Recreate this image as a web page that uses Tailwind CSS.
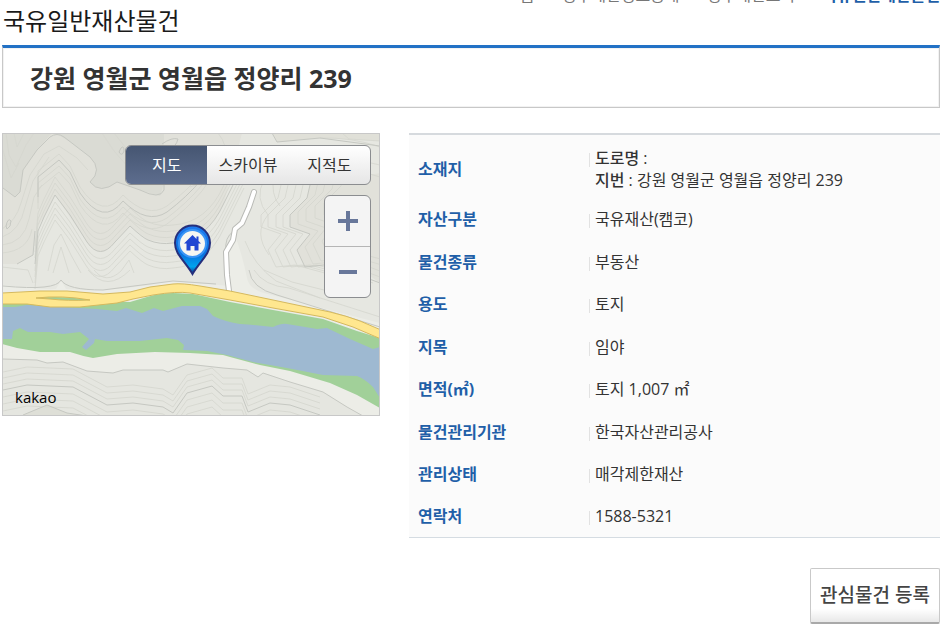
<!DOCTYPE html>
<html lang="ko">
<head>
    <meta charset="UTF-8">
    <meta name="viewport" content="width=device-width, initial-scale=1.0">
    <title>국유일반재산물건</title>
    <script src="https://cdn.jsdelivr.net/npm/@tailwindcss/browser@4"></script>
</head>
<body class="bg-white pl-[2px] pr-[7px] overflow-x-hidden font-['Open_Sans','Noto_Sans_CJK_KR',sans-serif] text-[#333]">

    <!-- Breadcrumb -->
    <nav class="-mt-[17px] flex justify-end gap-[9px] h-6 text-base leading-6 text-[#777] whitespace-nowrap">
        <a href="#">홈</a>
        <span class="text-[#bbb]">&gt;</span>
        <a href="#">정부재산정보공개</a>
        <span class="text-[#bbb]">&gt;</span>
        <a href="#">정부재산조회</a>
        <span class="text-[#bbb]">&gt;</span>
        <a href="#" class="font-bold text-[#1f5fa8]">국유일반재산물건</a>
    </nav>

    <h1 class="pl-px text-2xl leading-7 text-[#1a1a1a]">국유일반재산물건</h1>

    <div class="mt-[10px] h-[63px] flex items-center pl-[27px] border border-[#c8c8c8] border-t-[3px] border-t-[#2271c5] shadow-[inset_0_0_0_1px_#f2f2f2]">
        <h2 class="text-[25px] leading-8 font-bold">강원 영월군 영월읍 정양리 239</h2>
    </div>

    <main class="mt-[25px] flex items-start gap-[29px]">

        <!-- Map -->
        <div class="relative w-[378px] h-[283px] shrink-0 overflow-hidden border border-[#c8c8c8]">
            <svg class="block w-full h-full" viewBox="1 1 376 281" fill="none">
                <defs>
                    <path id="ridge" d="M33 131L36 98L42 84L53 62L68 82L85 109Q98 128 113 109L128 93Q141 105 146 107Q158 112 171 110Q205 108 222 70Q232 50 242 30"/>
                    <path id="upper" d="M36 64V44L57 27L68 39L78 60Q101 94 121 68Q145 92 165 79Q185 64 200 46L218 20"/>
                    <path id="east" d="M308 52L305 65L288 82V94L308 101L295 117L303 134L322 132Q350 138 378 150"/>
                    <path id="south" d="M1 257L25 252L71 254L105 272L131 270L161 274L171 280L185 260L210 253L221 263H240L246 279L268 270L288 272L318 282"/>
                    <linearGradient id="pin" x1="0" y1="0" x2="0" y2="1">
                        <stop offset="0" stop-color="#1d7af0"/>
                        <stop offset=".6" stop-color="#0873df"/>
                        <stop offset=".85" stop-color="#00a4ee"/>
                        <stop offset="1" stop-color="#122a86"/>
                    </linearGradient>
                </defs>
                <rect width="380" height="285" fill="#e6e7e1"/>

                <!-- terrain shading -->
                <path d="M0 0H240L222 70Q205 108 171 110L146 107L128 93L113 109Q98 128 85 109L53 62L42 84L33 98L31 122L15 131H0z" fill="#e1e1da"/>
                <path d="M0 0H50L35 17L21 37L18 59L13 64L1 55zM55 1L70 10L88 24Q101 37 88 49Q98 62 115 49L138 57L158 63L162 50V0z" fill="#dadbd4"/>
                <path d="M308 52L305 65L288 82V94L308 101L295 117L303 134L322 132Q350 128 378 150V40z" fill="#e1e1da"/>
                <path d="M270 0L275 9L318 5L378 8V0z" fill="#e0e0d8"/>
                <path d="M0 152Q40 157 54 156L59 147L64 156Q110 160 170 148L228 153L224 119L232 100Q240 120 245 145Q247 158 270 162L378 190V283H0z" fill="#ecede7"/>
                <path d="M1 226L35 227L45 230L61 229L85 238L111 240L121 237H161L166 239L185 231L221 235L245 237L256 244L261 240L288 249L321 259L345 274L361 283H0z" fill="#e5e6e0"/>
                <path d="M21 282L45 272L65 280L85 283z" fill="#dedfd7"/>

                <!-- minor contours -->
                <g stroke="#d4d5ce" stroke-width=".8">
                    <use href="#ridge" y="-6"/><use href="#ridge" y="-12"/><use href="#ridge" y="-18"/>
                    <use href="#ridge" y="7"/><use href="#ridge" y="13"/><use href="#ridge" y="19"/><use href="#ridge" y="25"/>
                    <use href="#upper" y="-6"/><use href="#upper" y="6"/><use href="#upper" y="12"/>
                    <use href="#east" x="-7"/><use href="#east" x="-14"/><use href="#east" x="-22"/><use href="#east" x="-29"/>
                    <use href="#east" x="8" y="-3"/><use href="#east" x="16" y="-6"/><use href="#east" x="25" y="-9"/><use href="#east" x="34" y="-12"/>
                    <use href="#south" y="-6"/><use href="#south" y="-12"/><use href="#south" y="-18"/><use href="#south" y="7"/><use href="#south" y="14"/><use href="#south" y="21"/>
                    <path d="M4 0L7 22L14 34L24 12L32 0M0 14L9 45L17 30M12 0L15 14L22 0M100 0L112 18L126 34L148 50M112 0L132 25L153 42M0 112Q22 110 27 86L32 64L40 52M0 120Q26 118 30 96M0 104Q18 98 23 74L31 48L47 24M0 96Q14 88 19 70L28 42L42 21L57 13L75 25L86 37"/>
                    <path d="M46 138L52 112L59 101L69 122L79 140M51 140L59 114L67 140M0 134L26 137L31 150M92 137Q104 152 119 138L127 127L132 140M86 137Q105 160 128 137"/>
                    <path d="M180 48Q196 44 205 12M188 54Q208 49 213 18M216 0Q226 12 223 27M275 20Q305 15 378 32M278 35Q310 22 378 44M318 5Q350 4 378 14M340 0L347 6L378 8"/>
                    <path d="M262 47Q252 65 266 82Q251 100 267 122M272 40Q268 62 278 73M243 108Q252 132 274 148L318 165M262 137L290 149L326 158M252 137Q262 153 287 155L378 184"/>
                </g>
                <!-- major contours -->
                <g stroke="#c6c8c2" stroke-width="1">
                    <use href="#ridge"/><use href="#upper"/><use href="#east"/><use href="#south"/>
                    <path d="M1 55L13 64L18 59L21 37L35 17L48 4Q55 -1 62 4L88 24Q101 37 88 49Q98 62 115 49L138 57Q158 67 162 57V50"/>
                    <path d="M15 131L31 122L33 98M270 0L275 9L318 5L378 13M4 93Q6 84 9 88Q9 94 5 96zM119 15Q122 12 122 18Q120 24 117 19zM160 11Q170 4 176 6Q174 14 166 18"/>
                    <path d="M1 226L35 227L45 230L61 229L85 238L111 240L121 237H161L166 239L185 231L221 235L245 237L256 244L261 240L288 249L321 259L345 274L361 283M21 282L45 272L65 280L85 283"/>
                    <path d="M1 153Q54 158 59 147Q65 157 101 157L171 148L214 151M224 119Q222 104 232 98M247 137Q249 155 275 162L378 194"/>
                </g>

                <!-- lane -->
                <path d="M252 59L247 74L240 90L233 96L231 107L224 119L225 142L227 158" stroke="#b9bab6" stroke-width="6" stroke-linecap="round" stroke-linejoin="round"/>
                <path d="M252 59L247 74L240 90L233 96L231 107L224 119L225 142L227 158" stroke="#fff" stroke-width="4" stroke-linecap="round" stroke-linejoin="round"/>

                <!-- river banks and river -->
                <path d="M0 168H95L128 169L145 164Q158 160 171 160L191 161L228 169L271 177L321 186L355 198L378 205V275L355 262L328 250L288 238L258 232L228 224L221 222L188 220L153 219L115 221L91 225Q80 223 68 219H38L15 215L0 211z" fill="#a1d099"/>
                <path d="M0 174H13L25 172L78 175L95 176L115 178L124 175L140 180L152 175L161 178L180 173L198 173L205 176L211 183Q224 189 238 191Q255 192 271 194Q280 190 285 191L315 196L325 195L348 206L371 216L378 214V265L371 254Q363 246 355 243L321 242L285 235L251 229L225 222L205 218L181 217L182 212L176 207L165 205L138 208H105L93 206L92 210L84 217L80 214L87 206L78 199L61 201L48 199H26L18 195L11 198L10 206H0z" fill="#9eb9d1"/>

                <!-- highway -->
                <path d="M0 160L38 158H65L101 161L128 159L148 154L171 151Q180 150 198 153L228 158L271 167L328 179Q345 183 358 188L379 197V206L351 194L321 184L271 175L228 167L188 160Q175 158 151 162L131 166L115 170L78 174H48L25 171H0z" fill="#ffe78f" stroke="#d5b95e" stroke-width="1"/>
                <path d="M34 165Q60 162 88 167Q65 168 48 166z" fill="#a1d099" stroke="#d5b95e" stroke-width="1"/>

                <!-- marker -->
                <path d="M190.500 92.500A17.500 17.500 0 0 0 173 110C173 121 182 127 190.500 141C199 127 208 121 208 110A17.500 17.500 0 0 0 190.500 92.500z" fill="url(#pin)" stroke="#252f7c" stroke-width="2"/>
                <circle cx="190.500" cy="110.500" r="13.500" fill="#f6f7f2" stroke="#3b95f5" stroke-width="2"/>
                <path d="M190.500 102L182 110.500H184.500V117.500H188.500V113H192.500V117.500H196.500V110.500H199L196.500 108V103.500H194.500V106z" fill="#2147d2"/>
            </svg>

            <!-- Map controls -->
            <div class="absolute top-[11px] right-2 flex flex-col items-end gap-[10px]">
                <div class="grid grid-cols-3 w-[246px] h-10 overflow-hidden rounded-md border border-[#8b8d90] bg-linear-to-b from-white to-[#e6e6e6] text-base">
                    <button type="button" class="bg-linear-to-b from-[#465672] to-[#5d6d8e] text-white">지도</button>
                    <button type="button">스카이뷰</button>
                    <button type="button">지적도</button>
                </div>
                <div class="grid grid-rows-2 w-[47px] h-[103px] rounded-md border border-[#8b8d90] bg-[#f4f4f4]">
                    <button type="button" aria-label="확대" class="flex items-center justify-center border-b border-[#b5b5b5]">
                        <svg width="20" height="20" viewBox="0 0 20 20"><path d="M8 0h4v8h8v4h-8v8H8v-8H0V8h8z" fill="#68779a"/></svg>
                    </button>
                    <button type="button" aria-label="축소" class="flex items-center justify-center">
                        <svg width="20" height="20" viewBox="0 0 20 20"><path d="M1 8h18v4H1z" fill="#68779a"/></svg>
                    </button>
                </div>
            </div>
            <span class="absolute left-3 bottom-2 font-['Open_Sans'] text-[15px] leading-5 font-medium text-black">kakao</span>
        </div>

        <!-- Details -->
        <div class="flex-1 border-t-2 border-t-[#d6dade] border-b border-b-[#d5dce2] bg-[#fbfbfb]">
            <table class="w-full text-base leading-[22px] text-left">
                <tbody>
                    <tr class="h-[63px]">
                        <th scope="row" class="w-[180px] pt-1 pl-[9px] font-bold text-[#1f5fa8]">소재지</th>
                        <td class="pt-1">
                            <div class="flex gap-[5px]">
                                <span class="w-px h-[14px] mt-[6px] bg-[#e2e2e2]"></span>
                                <div>
                                    <p><strong class="font-medium">도로명 :</strong></p>
                                    <p><strong class="font-medium">지번 :</strong> 강원 영월군 영월읍 정양리 239</p>
                                </div>
                            </div>
                        </td>
                    </tr>
                    <tr class="h-[42px]">
                        <th scope="row" class="pl-[9px] font-bold text-[#1f5fa8]">자산구분</th>
                        <td><div class="flex gap-[5px]"><span class="w-px h-[14px] mt-[6px] bg-[#e2e2e2]"></span>국유재산(캠코)</div></td>
                    </tr>
                    <tr class="h-[43px]">
                        <th scope="row" class="pl-[9px] font-bold text-[#1f5fa8]">물건종류</th>
                        <td><div class="flex gap-[5px]"><span class="w-px h-[14px] mt-[6px] bg-[#e2e2e2]"></span>부동산</div></td>
                    </tr>
                    <tr class="h-[42px]">
                        <th scope="row" class="pl-[9px] font-bold text-[#1f5fa8]">용도</th>
                        <td><div class="flex gap-[5px]"><span class="w-px h-[14px] mt-[6px] bg-[#e2e2e2]"></span>토지</div></td>
                    </tr>
                    <tr class="h-[43px]">
                        <th scope="row" class="pl-[9px] font-bold text-[#1f5fa8]">지목</th>
                        <td><div class="flex gap-[5px]"><span class="w-px h-[14px] mt-[6px] bg-[#e2e2e2]"></span>임야</div></td>
                    </tr>
                    <tr class="h-[42px]">
                        <th scope="row" class="pl-[9px] font-bold text-[#1f5fa8]">면적(㎡)</th>
                        <td><div class="flex gap-[5px]"><span class="w-px h-[14px] mt-[6px] bg-[#e2e2e2]"></span>토지 1,007 ㎡</div></td>
                    </tr>
                    <tr class="h-[43px]">
                        <th scope="row" class="pl-[9px] font-bold text-[#1f5fa8]">물건관리기관</th>
                        <td><div class="flex gap-[5px]"><span class="w-px h-[14px] mt-[6px] bg-[#e2e2e2]"></span>한국자산관리공사</div></td>
                    </tr>
                    <tr class="h-[42px]">
                        <th scope="row" class="pl-[9px] font-bold text-[#1f5fa8]">관리상태</th>
                        <td><div class="flex gap-[5px]"><span class="w-px h-[14px] mt-[6px] bg-[#e2e2e2]"></span>매각제한재산</div></td>
                    </tr>
                    <tr class="h-[42px]">
                        <th scope="row" class="pl-[9px] font-bold text-[#1f5fa8]">연락처</th>
                        <td><div class="flex gap-[5px]"><span class="w-px h-[14px] mt-[6px] bg-[#e2e2e2]"></span>1588-5321</div></td>
                    </tr>
                </tbody>
            </table>
        </div>
    </main>

    <div class="mt-[30px] flex justify-end">
        <button type="button" class="w-[130px] h-14 rounded-xs border border-[#c9c9c9] border-b-2 border-b-[#a9a9a9] bg-linear-to-b from-white from-75% to-[#e8e8e8] text-[19px] font-medium text-[#444] whitespace-nowrap">관심물건 등록</button>
    </div>

</body>
</html>
